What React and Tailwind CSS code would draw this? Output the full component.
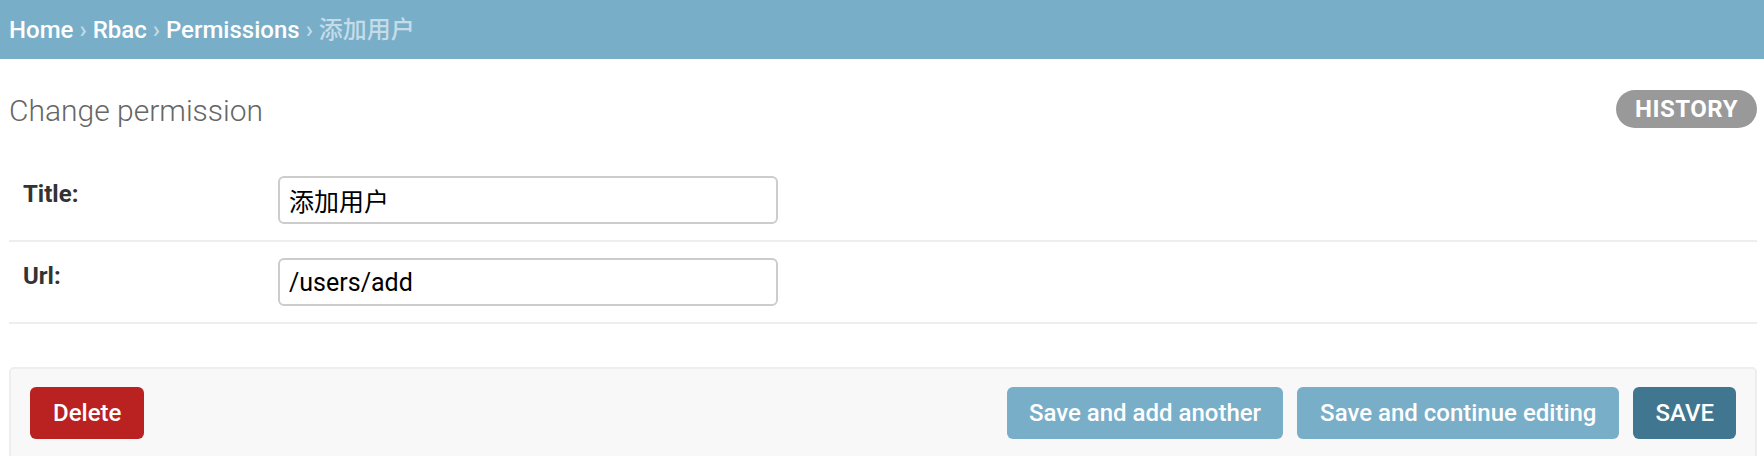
import React from "react";

// Django admin – change form for a Permission object
const crumbs = ["Home", "Rbac", "Permissions"];

const fields = [
  { label: "Title:", value: "添加用户" },
  { label: "Url:", value: "/users/add" },
];

export default function App() {
  return (
    <div
      className="min-h-screen bg-white text-[#333]"
      style={{ fontFamily: 'Roboto, "Noto Sans CJK SC", sans-serif' }}
    >
      {/* ── Breadcrumbs ── */}
      <div className="flex h-[59px] items-center bg-[#79aec8] pl-[9px] text-[24px] font-medium text-[#c4dce8]">
        {crumbs.map((c) => (
          <React.Fragment key={c}>
            <a className="text-white">{c}</a>
            <span className="mx-[6px]">›</span>
          </React.Fragment>
        ))}
        <span>添加用户</span>
      </div>

      <div className="pl-[9px] pr-[7px]">
        {/* ── Header ── */}
        <div className="mt-[31px] flex items-start justify-between">
          <h1 className="mt-[3px] text-[30px] leading-[36px] font-light text-[#666]">
            Change permission
          </h1>
          <a className="flex h-[38px] items-center rounded-full bg-[#999] px-[19px] text-[24px] font-bold tracking-[0.5px] text-white">
            HISTORY
          </a>
        </div>

        {/* ── Fieldset ── */}
        <div className="mt-[31px]">
          {fields.map((f) => (
            <div key={f.label} className="flex h-[82px] border-b-2 border-[#eee] pt-[16px]">
              <label className="w-[269px] pl-[14px] pt-[4px] text-[24px] leading-[29px] font-bold text-[#333]">
                {f.label}
              </label>
              <input
                readOnly
                value={f.value}
                className="h-[48px] w-[500px] rounded-[6px] border-2 border-[#ccc] px-[9px] text-[25px] text-black outline-none"
              />
            </div>
          ))}
        </div>

        {/* ── Submit row ── */}
        <div className="mt-[43px] flex h-[120px] items-start justify-between rounded-[5px] border-2 border-[#eee] bg-[#f8f8f8] px-[19px] pt-[18px]">
          <button className="h-[52px] rounded-[6px] bg-[#ba2121] px-[23px] text-[24px] font-medium text-white">
            Delete
          </button>
          <div className="flex gap-[14px]">
            <button className="h-[52px] rounded-[6px] bg-[#79aec8] px-[22px] text-[24px] font-medium text-white">
              Save and add another
            </button>
            <button className="h-[52px] rounded-[6px] bg-[#79aec8] px-[23px] text-[24px] font-medium text-white">
              Save and continue editing
            </button>
            <button className="h-[52px] rounded-[6px] bg-[#417690] px-[22px] text-[24px] font-medium text-white">
              SAVE
            </button>
          </div>
        </div>
      </div>
    </div>
  );
}
